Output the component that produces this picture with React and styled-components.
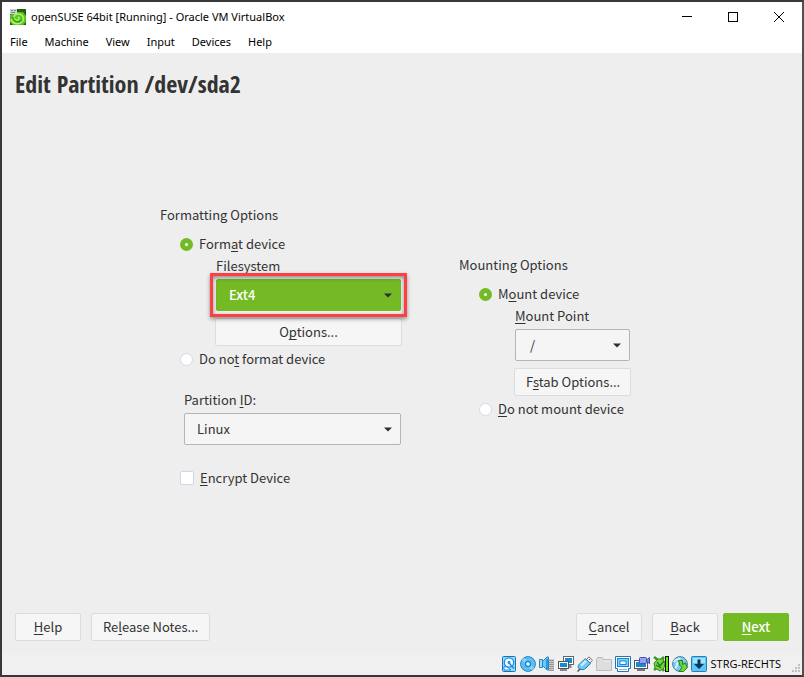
import React from "react";
import styled, { createGlobalStyle, css } from "styled-components";

const GREEN = "#73ba25";

const GlobalStyle = createGlobalStyle`
  *, *::before, *::after { box-sizing: border-box; }
  body { margin: 0; background: #3a383a; }
  button, input, select { font: inherit; color: inherit; margin: 0; }
`;

const Window = styled.div`
  min-height: 100vh;
  display: flex;
  flex-direction: column;
  border: 2px solid #39373a;
  border-right-color: #505050;
  background: #eeeeee;
  color: #333333;
  font: 13px/20px "Noto Sans CJK SC", sans-serif;
`;

const TitleBar = styled.header`
  display: flex;
  align-items: center;
  height: 29px;
  padding-left: 8px;
  background: #fff;
  color: #000;
  font: 11px/16px "Noto Sans", sans-serif;
`;

const WindowTitle = styled.span`
  flex: 1;
  padding-left: 5px;
  white-space: nowrap;
`;

const CaptionButton = styled.button`
  display: grid;
  place-items: center;
  width: 46px;
  height: 29px;
  padding: 0;
  border: 0;
  background: none;
`;

const MenuBar = styled.nav`
  display: flex;
  gap: 17px;
  height: 22px;
  padding: 0 8px;
  background: #fff;
  color: #000;
  font: 11px/22px "Noto Sans", sans-serif;
`;

const MenuItem = styled.button`
  padding: 0;
  border: 0;
  background: none;
`;

const Page = styled.main`
  flex: 1;
  display: flex;
  flex-direction: column;
  padding: 15px 13px 12px;
`;

const Heading = styled.h1`
  margin: 0;
  font: bold 24px/32px "Open Sans Condensed", "Roboto Condensed", "Liberation Sans Narrow", sans-serif;
`;

const Form = styled.form`
  flex: 1;
  display: flex;
  align-items: center;
  justify-content: center;
  gap: 58px;
  padding: 0 14px 20px 0;
`;

const Column = styled.section`
  width: ${(p) => p.$width};
  padding-bottom: ${(p) => (p.$raised ? "19px" : "0")};
`;

const SectionTitle = styled.h2`
  margin: 0 0 9px;
  font: inherit;
`;

const Choice = styled.label`
  display: flex;
  align-items: center;
  gap: 6px;
  padding-left: 20px;
  white-space: nowrap;
`;

const Radio = styled.input.attrs({ type: "radio" })`
  appearance: none;
  width: 13px;
  height: 13px;
  border: 1px solid #d5daea;
  border-radius: 50%;
  background: #fff;
  &:checked {
    border: 5px solid ${GREEN};
  }
`;

const CheckBox = styled.input.attrs({ type: "checkbox" })`
  appearance: none;
  width: 14px;
  height: 14px;
  border: 1px solid #cfd8ea;
  border-radius: 2px;
  background: #fff;
  &:checked {
    background: ${GREEN};
  }
`;

const Nested = styled.div`
  display: flex;
  flex-direction: column;
  padding: 2px 0 3px 56px;
`;

const PartitionField = styled.div`
  display: flex;
  flex-direction: column;
  padding: 21px 0 23px 24px;
`;

const FieldLabel = styled.label`
  margin-bottom: 3px;
`;

const SelectFrame = styled.div`
  position: relative;
  display: grid;
  align-items: center;
  ${(p) =>
    p.$marked &&
    css`
      z-index: 1;
      &::after {
        content: "";
        position: absolute;
        inset: -6px;
        border: 3px solid #fb4144;
        box-shadow: 0 2px 4px rgba(0, 0, 0, 0.4), inset 0 2px 4px rgba(0, 0, 0, 0.4);
        pointer-events: none;
      }
    `}
  > * {
    grid-area: 1 / 1;
  }
  > svg {
    justify-self: end;
    margin-right: 9px;
    pointer-events: none;
  }
`;

const Select = styled.select`
  appearance: none;
  width: 100%;
  height: 32px;
  padding: 0 24px 0 ${(p) => (p.$inset ? "14px" : "12px")};
  border: 1px solid ${(p) => (p.$active ? GREEN : "#b5b5b5")};
  border-radius: 2px;
  background: ${(p) => (p.$active ? GREEN : "#f5f5f5")};
  color: ${(p) => (p.$active ? "#fff" : "#333")};
  font-weight: ${(p) => (p.$active ? 500 : 400)};
`;

const Button = styled.button`
  height: 28px;
  min-width: 66px;
  padding: 0 11px;
  border: 1px solid ${(p) => (p.$primary ? GREEN : "#dcdcdc")};
  border-radius: 2px;
  background: ${(p) => (p.$primary ? GREEN : "#f6f6f6")};
  color: ${(p) => (p.$primary ? "#fff" : "#333")};
  font-weight: ${(p) => (p.$primary ? 500 : 400)};
  white-space: nowrap;
`;

const NestedButton = styled(Button)`
  margin: 7px -1px 0;
`;

const Actions = styled.footer`
  display: flex;
  gap: 10px;
`;

const ActionGroup = styled.div`
  display: flex;
  gap: ${(p) => p.$gap};
  margin-left: ${(p) => (p.$end ? "auto" : "0")};
`;

const Mnemonic = styled.u`
  text-decoration-thickness: 1px;
  text-underline-offset: 2px;
  text-decoration-skip-ink: none;
`;

const StatusBar = styled.footer`
  display: flex;
  align-items: center;
  justify-content: flex-end;
  gap: 3px;
  height: 22px;
  background: #f0f0f0;
  color: #000;
  font: 11px/16px "Open Sans", sans-serif;
`;

const HostKey = styled.span`
  padding: 0 6px 0 1px;
`;

const Grip = styled.svg`
  align-self: flex-end;
`;

function Label({ text }) {
  const [before, key, after] = text.split("_");
  return (
    <span>
      {before}
      {key && <Mnemonic>{key}</Mnemonic>}
      {after}
    </span>
  );
}

const Arrow = () => (
  <svg width="8" height="5" viewBox="0 0 8 5">
    <path d="M0 0.5h8L4 4.5z" fill="#2e2e2e" />
  </svg>
);

function Combo({ id, value, marked, inset }) {
  return (
    <SelectFrame $marked={marked}>
      <Select id={id} $active={marked} $inset={inset} defaultValue={value}>
        <option>{value}</option>
      </Select>
      <Arrow />
    </SelectFrame>
  );
}

const AppIcon = () => (
  <svg width="16" height="16" viewBox="0 0 16 16">
    <rect width="16" height="16" fill="#245c18" />
    <path d="M0 6l5-3h8l3 4v6l-3 3H3l-3-3z" fill="#58c51e" />
    <path d="M1 10c1 5 8 6 11 3 3-3 1-8-4-8-4 0-6 5-2 6 3 1 4-2 2-3" fill="none" stroke="#b4ee70" strokeWidth="1.5" />
    <path d="M3 8c0 5 6 6 9 3" fill="none" stroke="#2a8a16" strokeWidth="1" />
    <rect width="7" height="5" fill="#ccd5d6" />
    <path d="M1 1.5h2M4 1.5h2M1 3.5h4" stroke="#7b868a" />
  </svg>
);

const ICONS = {
  "Hard disks": (
    <>
      <rect x="1.5" y=".5" width="13" height="15" rx="1" fill="#9bd8fb" stroke="#1175bd" />
      <circle cx="8" cy="6.5" r="4.7" fill="#f4fbff" stroke="#1b8ede" strokeWidth="1.3" />
      <circle cx="8" cy="6.5" r="1.4" fill="#1b8ede" />
      <path d="M8 7l5 5.5" stroke="#1b8ede" strokeWidth="1.5" />
      <path d="M3 10.5l3 .5 4 3H3z" fill="#fff" stroke="#1b8ede" />
    </>
  ),
  "Optical drives": (
    <>
      <circle cx="8" cy="8" r="7.4" fill="#5cc0f7" stroke="#2a80b3" />
      <path d="M8 8L3 3M8 8l5 5" stroke="#8cd4fa" strokeWidth="3" />
      <circle cx="8" cy="8" r="3.2" fill="#1688d8" />
      <circle cx="8" cy="8" r="1.8" fill="#fff" />
    </>
  ),
  Audio: (
    <>
      <rect x="9" y="3" width="6" height="12" fill="#c9c9c9" />
      <path d="M10 4.5h5M10 6.5h5M10 8.5h5M10 10.5h5M10 12.5h5M10 14.5h5" stroke="#999" />
      <path d="M.5 3.5h3v8h-3zM3.5 5.5L8 1h1.5v13H8l-4.500-4.500z" fill="#6cc7fa" stroke="#2b87bd" />
      <path d="M2 4v7" stroke="#c8ecff" />
      <path d="M8 3v10" stroke="#1688d8" strokeWidth="1.5" />
    </>
  ),
  Network: (
    <>
      <rect x="5.5" y=".5" width="10" height="8" fill="#fff" stroke="#666" />
      <rect x="7" y="2" width="7" height="5" fill="#1688d8" />
      <path d="M12 9v3" stroke="#888" strokeWidth="3" />
      <rect x=".5" y="5.5" width="10" height="7" fill="#fff" stroke="#555" />
      <rect x="2" y="7" width="7" height="4" fill="#1688d8" />
      <path d="M2 14h7" stroke="#888" strokeWidth="2" />
    </>
  ),
  USB: (
    <>
      <path d="M9.500 3.500L12 .8l3.500 3.500L13 7z" fill="#f2f2f2" stroke="#777" />
      <path d="M12 3l1 1" stroke="#555" />
      <path d="M8.500 2.500l5 5L9 12c-2 2-4.500 2-6.500 1S1 9 3 7.500z" fill="#6cc7fa" stroke="#2678ab" />
      <path d="M9 5L4 9.500" stroke="#c9ecff" strokeWidth="2.500" />
      <path d="M3 13l-2.500 2.500" stroke="#555" strokeWidth="1.500" />
    </>
  ),
  "Shared folders": (
    <>
      <path d="M.5 14.500v-11l1-2h5l1 2h8v11z" fill="#dedede" stroke="#bbb" />
      <path d="M8 5h6" stroke="#eee" />
    </>
  ),
  Display: (
    <>
      <path d="M.5 .5h15v12h-2v3h-11v-3h-2z" fill="#fff" stroke="#2678ab" />
      <rect x="2.500" y="2.500" width="11" height="8" fill="#7fd0fb" stroke="#1688d8" />
      <rect x="5" y="5" width="6" height="3.500" fill="#fff" stroke="#1688d8" />
      <path d="M4 13.500h8" stroke="#7bbce0" />
    </>
  ),
  Recording: (
    <>
      <rect x=".5" y="4.500" width="13" height="8" fill="#fff" stroke="#555" />
      <rect x="2" y="6" width="10" height="5" fill="#1688d8" />
      <path d="M3 14h8" stroke="#777" strokeWidth="2" />
      <rect x="5.500" y="1.500" width="7" height="6" rx="1" fill="#94a3ef" stroke="#4053ac" />
      <path d="M12.500 4l3-2.500v6l-3-2z" fill="#7788e0" stroke="#4053ac" />
    </>
  ),
  Virtualization: (
    <>
      <path d="M1 1l4 3M1 14l4-3M11 1L8 4M11 15l-3-4" stroke="#3a9721" strokeWidth="2.5" />
      <path d="M1 7l4-4h5l2 4-1 5-4 3-5-3z" fill="#75d743" stroke="#348a20" />
      <path d="M4 6l3 4 4-5M3 9l5 3" fill="none" stroke="#237a19" strokeWidth="1.3" />
      <rect x="12.5" y=".5" width="3" height="15" fill="#62eb0a" stroke="#111" />
    </>
  ),
  "Mouse integration": (
    <>
      <circle cx="8" cy="8" r="7.400" fill="#7acbf2" stroke="#477f9d" />
      <path d="M2 6c2-4 5-2 6-4M3 12c3-1 1-4 3-6" stroke="#d7f3ff" strokeWidth="2" fill="none" />
      <path d="M6.500 4.500h4v4l3-1.500 2 4.500-4 4H7l3-4-2-2z" fill="#70d738" stroke="#247b20" />
    </>
  ),
  Keyboard: (
    <>
      <rect x=".5" y=".5" width="15" height="15" rx="1" fill="#65c4f6" stroke="#1784bd" />
      <path d="M2 2h12v5H2z" fill="#a6e0fb" />
      <path d="M6.5 3.500h3V8H13l-5 5-5-5h3.5z" fill="#07385f" />
    </>
  ),
};

export default function App() {
  return (
    <>
      <GlobalStyle />
      <Window>
        <TitleBar>
          <AppIcon />
          <WindowTitle>openSUSE 64bit [Running] - Oracle VM VirtualBox</WindowTitle>
          <CaptionButton aria-label="Minimize">
            <svg width="10" height="10"><path d="M0 4.5h10" stroke="#000" /></svg>
          </CaptionButton>
          <CaptionButton aria-label="Maximize">
            <svg width="10" height="10"><rect x=".5" y=".5" width="9" height="9" fill="none" stroke="#000" /></svg>
          </CaptionButton>
          <CaptionButton aria-label="Close">
            <svg width="10" height="10"><path d="M0 0l10 10M10 0L0 10" stroke="#000" /></svg>
          </CaptionButton>
        </TitleBar>
        <MenuBar>
          {["File", "Machine", "View", "Input", "Devices", "Help"].map((item) => (
            <MenuItem key={item}>{item}</MenuItem>
          ))}
        </MenuBar>
        <Page>
          <Heading>Edit Partition /dev/sda2</Heading>
          <Form>
            <Column $width="241px">
              <SectionTitle>Formatting Options</SectionTitle>
              <Choice>
                <Radio name="format" defaultChecked />
                <Label text="Form_a_t device" />
              </Choice>
              <Nested>
                <FieldLabel htmlFor="filesystem">Filesystem</FieldLabel>
                <Combo id="filesystem" value="Ext4" marked />
                <NestedButton type="button"><Label text="O_p_tions..." /></NestedButton>
              </Nested>
              <Choice>
                <Radio name="format" />
                <Label text="Do no_t_ format device" />
              </Choice>
              <PartitionField>
                <FieldLabel htmlFor="partition"><Label text="Partition _I_D:" /></FieldLabel>
                <Combo id="partition" value="Linux" />
              </PartitionField>
              <Choice>
                <CheckBox />
                <Label text="_E_ncrypt Device" />
              </Choice>
            </Column>
            <Column $width="171px" $raised>
              <SectionTitle>Mounting Options</SectionTitle>
              <Choice>
                <Radio name="mount" defaultChecked />
                <Label text="M_o_unt device" />
              </Choice>
              <Nested>
                <FieldLabel htmlFor="mountpoint"><Label text="_M_ount Point" /></FieldLabel>
                <Combo id="mountpoint" value="/" inset />
                <NestedButton type="button"><Label text="F_s_tab Options..." /></NestedButton>
              </Nested>
              <Choice>
                <Radio name="mount" />
                <Label text="_D_o not mount device" />
              </Choice>
            </Column>
          </Form>
          <Actions>
            <ActionGroup $gap="10px">
              <Button><Label text="_H_elp" /></Button>
              <Button><Label text="Re_l_ease Notes..." /></Button>
            </ActionGroup>
            <ActionGroup $gap="10px" $end>
              <Button><Label text="_C_ancel" /></Button>
              <ActionGroup $gap="5px">
                <Button><Label text="_B_ack" /></Button>
                <Button $primary><Label text="_N_ext" /></Button>
              </ActionGroup>
            </ActionGroup>
          </Actions>
        </Page>
        <StatusBar>
          {Object.entries(ICONS).map(([name, art]) => (
            <svg key={name} width="16" height="16" viewBox="0 0 16 16" role="img" aria-label={name}>{art}</svg>
          ))}
          <HostKey>STRG-RECHTS</HostKey>
          <Grip width="12" height="12" viewBox="0 0 12 12" fill="#bfbfbf">
            <path d="M8 1h2v2H8zM5 4h2v2H5zM8 4h2v2H8zM2 7h2v2H2zM5 7h2v2H5zM8 7h2v2H8z" />
          </Grip>
        </StatusBar>
      </Window>
    </>
  );
}
